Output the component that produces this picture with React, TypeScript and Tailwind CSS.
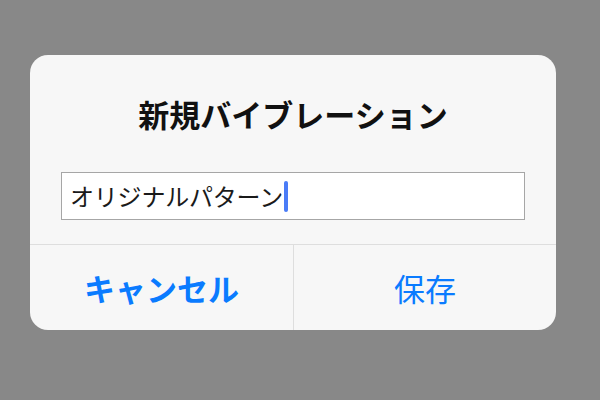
export default function App() {
  return (
    <div
      className="w-[600px] h-[400px] bg-[#888888] pt-[55px] pl-[30px]"
      style={{ fontFamily: '"Noto Sans CJK JP", "Noto Sans", sans-serif' }}
    >
      <div className="w-[526px] h-[275px] rounded-[18px] bg-[#f7f7f7] flex flex-col overflow-hidden">
        {/* Title */}
        <div className="h-[117px] flex items-center justify-center">
          <h1 className="text-[31px] leading-none font-bold text-[#111111]">新規バイブレーション</h1>
        </div>

        {/* Text field */}
        <div className="mx-[31px] h-[48px] bg-white border border-[#a6a6a6] flex items-center pl-[8px]">
          <span className="text-[24px] leading-none text-[#1a1a1a] tracking-[-0.2px]">オリジナルパターン</span>
          <span className="w-[4px] h-[31px] rounded-full bg-[#4a7cf7] ml-[1px]" />
        </div>

        {/* Buttons */}
        <div className="mt-[24px] flex-1 flex border-t border-[#dedede]">
          <button className="w-[264px] flex items-center justify-center border-r border-[#dedede] text-[31px] leading-none font-bold text-[#0a7bff]">
            キャンセル
          </button>
          <button className="flex-1 flex items-center justify-center text-[31px] leading-none text-[#0a7bff]">
            保存
          </button>
        </div>
      </div>
    </div>
  );
}
